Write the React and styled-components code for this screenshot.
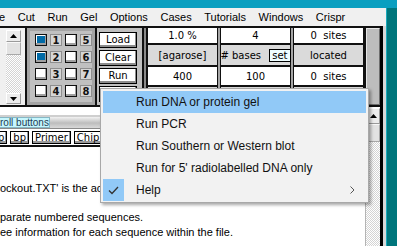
import React from "react";
import styled, { createGlobalStyle, css } from "styled-components";

const GlobalStyle = createGlobalStyle`
  html, body { margin: 0; padding: 0; background: #007a80; }
  body { width: 397px; height: 246px; overflow: hidden; }
  * { box-sizing: border-box; }
`;

const Screen = styled.div`
  position: relative;
  width: 397px;
  height: 246px;
  display: flex;
  flex-direction: column;
  overflow: hidden;
  font-family: "Liberation Sans", Arial, sans-serif;
`;

const TitleStrip = styled.div`
  height: 8px;
  background: #0a9fc0;
`;

const Main = styled.div`
  flex: 1;
  display: flex;
  min-height: 0;
`;

const Window = styled.div`
  width: 386px;
  display: flex;
  flex-direction: column;
  background: #d8d8d8;
`;

const Desktop = styled.div`
  flex: 1;
  background: #00767c;
  border-left: 1px solid #19a9bb;
`;

const MenuBar = styled.div`
  height: 18px;
  display: flex;
  align-items: center;
  background: #f0f0f0;
  font-size: 11px;
  color: #000;
  overflow: hidden;
  white-space: nowrap;
`;

const MenuItem = styled.span`
  padding: 0 6.3px;
  ${(p) => p.$first && css`padding-left: 0; margin-left: -1px;`}
`;

const Body = styled.div`
  width: 383px;
  flex: 1;
  display: flex;
  flex-direction: column;
  border-right: 3px solid #000;
  min-height: 0;
`;

/* ---------- toolbar ---------- */

const Toolbar = styled.div`
  height: 81px;
  display: flex;
  background: #c0c0c0;
  border-top: 2px solid #111;
  border-bottom: 2px solid #111;
  font-family: "DejaVu Sans", Verdana, sans-serif;
  font-size: 10px;
`;

const Gutter = styled.div`
  width: 25px;
  background: #f0f0f0;
  padding: 2px 4px 1px 6px;
  display: flex;
`;

const MiniScroll = styled.div`
  flex: 1;
  display: flex;
  flex-direction: column;
`;

const ScrollBtn = styled.div`
  height: ${(p) => p.$h}px;
  display: flex;
  align-items: center;
  justify-content: center;
  background: #ececec;
  border: 1px solid #9a9a9a;
  border-top-color: #fff;
  border-left-color: #fff;
`;

const Thumb = styled.div`
  height: ${(p) => p.$h}px;
  background: #e2e2e2;
  border: 1px solid #a8a8a8;
  border-top-color: #f8f8f8;
  border-left-color: #f8f8f8;
`;

const Track = styled.div`
  flex: 1;
  background: repeating-conic-gradient(#ffffff 0 25%, #d4d4d4 0 50%) 0 0 / 2px 2px;
`;

const CheckPanel = styled.div`
  width: 72px;
  border-left: 2px solid #111;
  border-right: 2px solid #111;
  padding: 6px 3px 0 8px;
  box-shadow: inset 0 0 0 3px #a4a4a4;
  display: grid;
  grid-template-columns: repeat(4, 12px);
  grid-auto-rows: 12px;
  column-gap: 3px;
  row-gap: 5px;
  align-content: start;
`;

const Box = styled.div`
  position: relative;
  width: 12px;
  height: 12px;
  background: #fff;
  border: 1px solid #111;
  box-shadow: inset -1px -2px 0 #a0a0a0;
  ${(p) =>
    p.$on &&
    css`
      &::after {
        content: "";
        position: absolute;
        left: 1px;
        top: 1px;
        right: 1px;
        bottom: 2px;
        background: #006aa6;
      }
    `}
`;

const Num = styled.div`
  width: 12px;
  height: 12px;
  background: #d6d6d6;
  border: 1px solid #8e8e8e;
  display: flex;
  align-items: center;
  justify-content: center;
  font-weight: bold;
  font-size: 10px;
  color: #111;
`;

const ButtonPanel = styled.div`
  width: 45px;
  padding: 4px 5px 0 2px;
  display: flex;
  flex-direction: column;
  gap: 2px;
`;

const PanelButton = styled.div`
  height: 16px;
  background: #fff;
  border: 1px solid #000;
  box-shadow: inset -1px -2px 0 #8c8c8c;
  display: flex;
  align-items: center;
  justify-content: center;
  padding-bottom: 1px;
  color: #000;
`;

const ThickDivider = styled.div`
  width: 6px;
  border-left: 2px solid #111;
  border-right: 2px solid #111;
  background: #8a8a8a;
`;

const ValueGrid = styled.div`
  width: 218px;
  display: flex;
  gap: 2px;
  background: #a6a6a6;
`;

const Column = styled.div`
  width: ${(p) => p.$w}px;
  display: flex;
  flex-direction: column;
  gap: 2px;
  background: #111;
  border-left: ${(p) => (p.$first ? 0 : 1)}px solid #111;
  border-right: ${(p) => (p.$last ? 3 : 1)}px solid #111;
`;

const Cell = styled.div`
  height: ${(p) => p.$h}px;
  background: ${(p) => (p.$gray ? "#dadada" : "#ffffff")};
  display: flex;
  align-items: center;
  justify-content: center;
  gap: 5px;
  white-space: pre;
  color: #000;
`;

const SetButton = styled.span`
  display: inline-flex;
  align-items: center;
  height: 13px;
  padding: 0 2px;
  background: #effeff;
  border: 1px solid #000;
`;

const BigThumb = styled.div`
  width: 14px;
  background: #bdbdbd;
  border: 1px solid #6e6e6e;
  border-top-color: #e6e6e6;
  border-left-color: #e6e6e6;
`;

/* ---------- lower pane ---------- */

const Lower = styled.div`
  flex: 1;
  display: flex;
  min-height: 0;
  background: #fff;
`;

const LowerMain = styled.div`
  width: 365px;
  display: flex;
  flex-direction: column;
  overflow: hidden;
`;

const TopGap = styled.div`
  height: 10px;
  border-bottom: 2px solid #cfcfcf;
`;

const LabelRow = styled.div`
  height: 11px;
  display: flex;
`;

const Label = styled.div`
  width: 50px;
  background: #c6f6fd;
  border: 1px solid #86b7c4;
  border-left: 0;
  font-size: 10px;
  line-height: 9px;
  color: #1d3c55;
  white-space: nowrap;
  overflow: hidden;
`;

const GradientBar = styled.div`
  flex: 1;
  background: linear-gradient(#f2f2f2, #bdbdbd 55%, #d9d9d9);
`;

const ButtonRow = styled.div`
  display: flex;
  gap: 3px;
  padding: 2px 0 1px;
  border-top: 1px solid #8a8a8a;
  border-bottom: 2px solid #111;
  font-family: "DejaVu Sans", Verdana, sans-serif;
  font-size: 10px;
  white-space: nowrap;
`;

const RowButton = styled.div`
  height: 13px;
  padding: 0 2px 1px;
  background: #fff;
  border: 1px solid #000;
  box-shadow: inset -1px -2px 0 #9a9a9a;
  display: flex;
  align-items: center;
  flex-shrink: 0;
  ${(p) => p.$cut && css`margin-left: -5px;`}
`;

const TextArea = styled.div`
  flex: 1;
  padding-top: 34px;
  font-size: 11px;
  line-height: 14.5px;
  color: #000;
  white-space: nowrap;
`;

const Para = styled.p`
  margin: 0 0 ${(p) => (p.$gap ? 14.5 : 0)}px;
`;

const LowerScroll = styled.div`
  width: 15px;
  display: flex;
  flex-direction: column;
  border-left: 1px solid #b4b4b4;
  padding-top: 1px;
`;

/* ---------- popup menu ---------- */

const Popup = styled.div`
  position: absolute;
  left: 100px;
  top: 88px;
  width: 269px;
  padding: 2px 2px 1px;
  background: #f2f2f2;
  border: 1px solid #a8a8a8;
  box-shadow: 2px 2px 3px rgba(0, 0, 0, 0.35);
  font-family: "Liberation Sans", Arial, sans-serif;
  font-size: 12px;
  color: #111;
`;

const PopupItem = styled.div`
  height: 22px;
  display: flex;
  align-items: center;
  background: ${(p) => (p.$active ? "#91c9f7" : "transparent")};
`;

const CheckCell = styled.div`
  width: 21px;
  height: 22px;
  display: flex;
  align-items: center;
  justify-content: center;
  background: ${(p) => (p.$on ? "#91c9f7" : "transparent")};
`;

const ItemText = styled.span`
  flex: 1;
  padding-left: 12px;
`;

const Chevron = styled.span`
  width: 16px;
  display: flex;
  align-items: center;
`;

const UpArrow = () => (
  <svg width="7" height="4" viewBox="0 0 7 4">
    <path d="M0 4 L3.5 0 L7 4 Z" fill="#000" />
  </svg>
);

const DownArrow = () => (
  <svg width="7" height="4" viewBox="0 0 7 4">
    <path d="M0 0 L3.5 4 L7 0 Z" fill="#000" />
  </svg>
);

const rows = [
  [true, 1, false, 5],
  [true, 2, false, 6],
  [false, 3, false, 7],
  [false, 4, false, 8],
];

const menuItems = [
  "Run DNA or protein gel",
  "Run PCR",
  "Run  Southern or Western blot",
  "Run for 5' radiolabelled DNA only",
];

export default function App() {
  return (
    <>
      <GlobalStyle />
      <Screen>
        <TitleStrip />
        <Main>
          <Window>
            <MenuBar>
              <MenuItem $first>e</MenuItem>
              <MenuItem>Cut</MenuItem>
              <MenuItem>Run</MenuItem>
              <MenuItem>Gel</MenuItem>
              <MenuItem>Options</MenuItem>
              <MenuItem>Cases</MenuItem>
              <MenuItem>Tutorials</MenuItem>
              <MenuItem>Windows</MenuItem>
              <MenuItem>Crispr</MenuItem>
            </MenuBar>
            <Body>
              <Toolbar>
                <Gutter>
                  <MiniScroll>
                    <ScrollBtn $h={12}>
                      <UpArrow />
                    </ScrollBtn>
                    <Thumb $h={13} />
                    <Track />
                    <ScrollBtn $h={11}>
                      <DownArrow />
                    </ScrollBtn>
                  </MiniScroll>
                </Gutter>
                <CheckPanel>
                  {rows.map(([a, n, b, m]) => (
                    <React.Fragment key={n}>
                      <Box $on={a} />
                      <Num>{n}</Num>
                      <Box $on={b} />
                      <Num>{m}</Num>
                    </React.Fragment>
                  ))}
                </CheckPanel>
                <ButtonPanel>
                  <PanelButton>Load</PanelButton>
                  <PanelButton>Clear</PanelButton>
                  <PanelButton>Run</PanelButton>
                  <PanelButton />
                </ButtonPanel>
                <ThickDivider />
                <ValueGrid>
                  <Column $w={70} $first>
                    <Cell $h={15}>1.0 %</Cell>
                    <Cell $h={20} $gray>[agarose]</Cell>
                    <Cell $h={18}>400</Cell>
                    <Cell $h={18} $gray />
                  </Column>
                  <Column $w={71}>
                    <Cell $h={15}>4</Cell>
                    <Cell $h={20} $gray>
                      # bases <SetButton>set</SetButton>
                    </Cell>
                    <Cell $h={18}>100</Cell>
                    <Cell $h={18} $gray />
                  </Column>
                  <Column $w={73} $last>
                    <Cell $h={15}>0  sites</Cell>
                    <Cell $h={20} $gray>located</Cell>
                    <Cell $h={18}>0  sites</Cell>
                    <Cell $h={18} $gray />
                  </Column>
                </ValueGrid>
                <BigThumb />
              </Toolbar>
              <Lower>
                <LowerMain>
                  <TopGap />
                  <LabelRow>
                    <Label>roll buttons</Label>
                    <GradientBar />
                  </LabelRow>
                  <ButtonRow>
                    <RowButton $cut>p</RowButton>
                    <RowButton>bp</RowButton>
                    <RowButton>Primer</RowButton>
                    <RowButton>Chip</RowButton>
                  </ButtonRow>
                  <TextArea>
                    <Para $gap>ockout.TXT' is the ac</Para>
                    <Para>parate numbered sequences.</Para>
                    <Para>ee information for each sequence within the file.</Para>
                  </TextArea>
                </LowerMain>
                <LowerScroll>
                  <ScrollBtn $h={16}>
                    <UpArrow />
                  </ScrollBtn>
                  <Thumb $h={18} />
                  <Track />
                </LowerScroll>
              </Lower>
            </Body>
          </Window>
          <Desktop />
        </Main>
        <Popup>
          {menuItems.map((t, i) => (
            <PopupItem key={t} $active={i === 0}>
              <CheckCell />
              <ItemText>{t}</ItemText>
            </PopupItem>
          ))}
          <PopupItem>
            <CheckCell $on>
              <svg width="11" height="9" viewBox="0 0 11 9">
                <path d="M1 4.5 L4 7.5 L10 1" fill="none" stroke="#333" strokeWidth="1.3" />
              </svg>
            </CheckCell>
            <ItemText>Help</ItemText>
            <Chevron>
              <svg width="5" height="8" viewBox="0 0 5 8">
                <path d="M0.5 0.5 L4 4 L0.5 7.5" fill="none" stroke="#555" strokeWidth="1" />
              </svg>
            </Chevron>
          </PopupItem>
        </Popup>
      </Screen>
    </>
  );
}
